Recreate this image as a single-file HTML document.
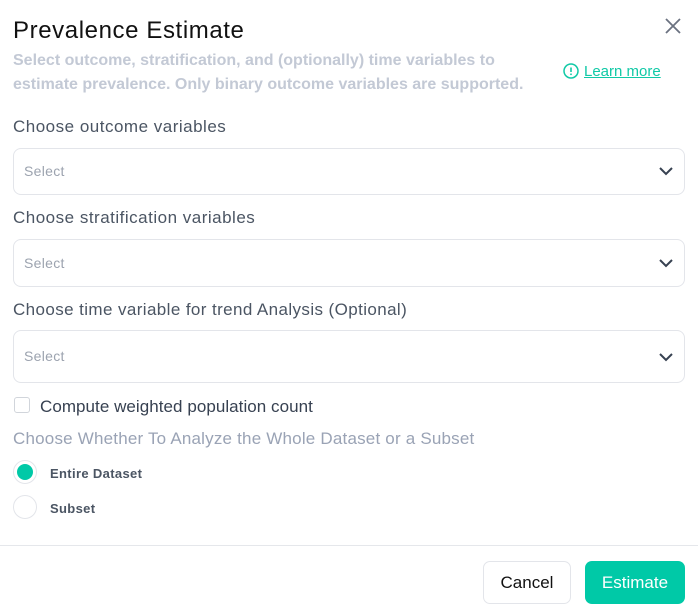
<!DOCTYPE html>
<html><head><style>
*{box-sizing:border-box;margin:0;padding:0}
body{width:698px;height:613px;background:#fff;font-family:"Liberation Sans",sans-serif;position:relative;overflow:hidden}
.a{position:absolute;white-space:nowrap}
.title{left:13px;top:17px;font-size:24px;color:#111;letter-spacing:0.6px}
.sub{left:13px;font-size:16px;font-weight:bold;color:#c3c9d5;letter-spacing:0px}
.lbl{left:13px;font-size:17px;color:#4b5563;letter-spacing:0.5px}
.sel{left:13px;width:672px;border:1px solid #e3e5ea;border-radius:8px}
.sel span{position:absolute;left:10px;font-size:14px;color:#9ca3af;letter-spacing:0.3px}
.sel svg{position:absolute;right:10px}
.btn{top:561px;height:43px;border-radius:7px;font-size:17px;display:flex;align-items:center;justify-content:center}
</style></head><body>
<div class="a title">Prevalence Estimate</div>
<svg class="a" style="left:664px;top:17px" width="18" height="18" viewBox="0 0 18 18"><path d="M2 2L16 16M16 2L2 16" stroke="#6b7280" stroke-width="1.8" fill="none"/></svg>
<div class="a sub" style="top:52px">Select outcome, stratification, and (optionally) time variables to</div>
<div class="a sub" style="top:76px">estimate prevalence. Only binary outcome variables are supported.</div>
<svg class="a" style="left:563px;top:63px" width="16" height="16" viewBox="0 0 16 16"><circle cx="8" cy="8" r="7" stroke="#10c9a6" stroke-width="1.5" fill="none"/><path d="M8 4.5V9" stroke="#10c9a6" stroke-width="1.6"/><circle cx="8" cy="11.3" r="0.9" fill="#10c9a6"/></svg>
<div class="a" style="left:584px;top:63px;font-size:15px;color:#10c9a6;text-decoration:underline">Learn more</div>

<div class="a lbl" style="top:117px">Choose outcome variables</div>
<div class="a sel" style="top:148px;height:47px"><span style="top:14px">Select</span><svg style="top:16px" width="16" height="12" viewBox="0 0 16 12"><path d="M2 3L8 9L14 3" stroke="#374151" stroke-width="2" fill="none"/></svg></div>
<div class="a lbl" style="top:208px">Choose stratification variables</div>
<div class="a sel" style="top:239px;height:48px"><span style="top:15px">Select</span><svg style="top:17px" width="16" height="12" viewBox="0 0 16 12"><path d="M2 3L8 9L14 3" stroke="#374151" stroke-width="2" fill="none"/></svg></div>
<div class="a lbl" style="top:300px;letter-spacing:0.4px">Choose time variable for trend Analysis (Optional)</div>
<div class="a sel" style="top:330px;height:53px"><span style="top:17px">Select</span><svg style="top:20px" width="16" height="12" viewBox="0 0 16 12"><path d="M2 3L8 9L14 3" stroke="#374151" stroke-width="2" fill="none"/></svg></div>

<div class="a" style="left:14px;top:397px;width:16px;height:16px;border:1px solid #d1d5db;border-radius:3px"></div>
<div class="a" style="left:40px;top:397px;font-size:17px;color:#374151;letter-spacing:0.05px">Compute weighted population count</div>
<div class="a" style="left:13px;top:429px;font-size:17px;color:#9aa3b5;letter-spacing:0.2px">Choose Whether To Analyze the Whole Dataset or a Subset</div>

<div class="a" style="left:13px;top:460px;width:24px;height:24px;border:1px solid #e3e5ea;border-radius:50%"></div>
<div class="a" style="left:17px;top:464px;width:16px;height:16px;background:#00c9a7;border-radius:50%"></div>
<div class="a" style="left:50px;top:466px;font-size:13px;font-weight:bold;color:#4b5563;letter-spacing:0.35px">Entire Dataset</div>
<div class="a" style="left:13px;top:495px;width:24px;height:24px;border:1px solid #e3e5ea;border-radius:50%"></div>
<div class="a" style="left:50px;top:501px;font-size:13px;font-weight:bold;color:#4b5563;letter-spacing:0.35px">Subset</div>

<div class="a" style="left:0;top:545px;width:698px;height:1px;background:#e5e7eb"></div>
<div class="a btn" style="left:483px;width:88px;border:1px solid #e3e5ea;color:#111">Cancel</div>
<div class="a btn" style="left:585px;width:100px;background:#00c9a7;color:#fff">Estimate</div>
</body></html>
